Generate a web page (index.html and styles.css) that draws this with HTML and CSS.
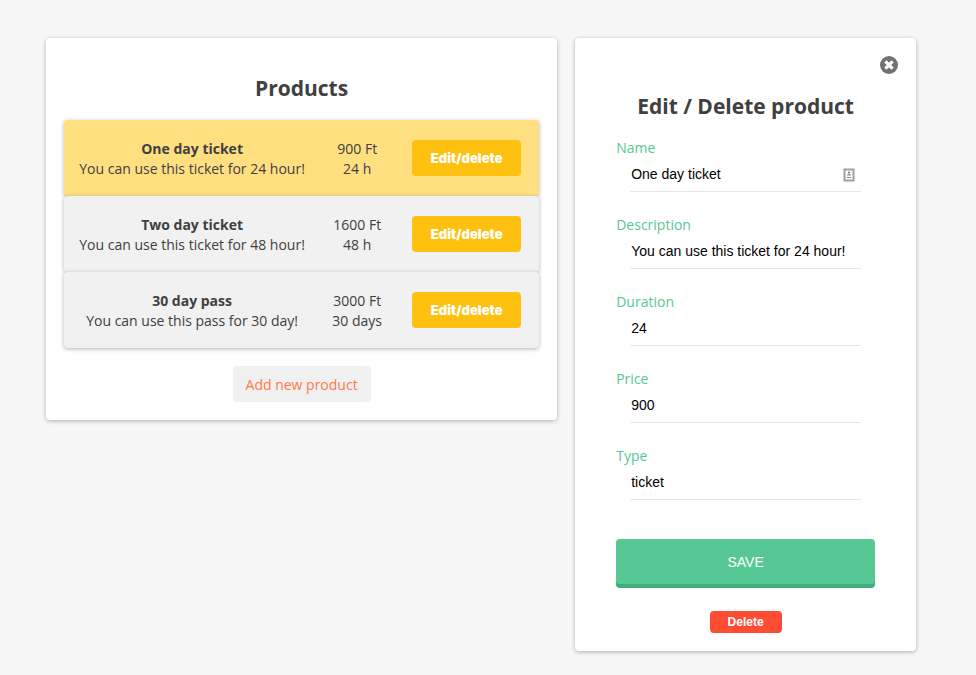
FILE: index.html
```html
<!DOCTYPE html>
<html lang="en">
<head>
<meta charset="utf-8">
<meta name="viewport" content="width=device-width, initial-scale=1">
<title>Products</title>
<link rel="stylesheet" href="styles.css">
</head>
<body>
<main class="layout">
  <section class="card">
    <h2 class="title">Products</h2>
    <ul class="products">
      <li class="product product-active">
        <div class="details"><strong>One day ticket</strong><br>You can use this ticket for 24 hour!</div>
        <div class="terms">900 Ft<br>24 h</div>
        <button class="edit" type="button">Edit/delete</button>
      </li>
      <li class="product">
        <div class="details"><strong>Two day ticket</strong><br>You can use this ticket for 48 hour!</div>
        <div class="terms">1600 Ft<br>48 h</div>
        <button class="edit" type="button">Edit/delete</button>
      </li>
      <li class="product">
        <div class="details"><strong>30 day pass</strong><br>You can use this pass for 30 day!</div>
        <div class="terms">3000 Ft<br>30 days</div>
        <button class="edit" type="button">Edit/delete</button>
      </li>
    </ul>
    <button class="add" type="button">Add new product</button>
  </section>

  <section class="card">
    <button class="close" type="button" aria-label="Close">
      <svg viewBox="0 0 18 18" width="18" height="18" aria-hidden="true">
        <circle cx="9" cy="9" r="9" fill="#727272"/>
        <path d="M5.4 5.4l7.2 7.2M12.6 5.4l-7.2 7.2" stroke="#fff" stroke-width="3.2"/>
      </svg>
    </button>
    <h2 class="title">Edit / Delete product</h2>
    <form class="form">
      <div class="field">
        <label for="name">Name</label>
        <div class="control">
          <input id="name" type="text" value="One day ticket">
          <svg class="contact" viewBox="0 0 12 14" width="12" height="14" aria-hidden="true">
            <rect x="1.5" y="1.5" width="9" height="11" fill="#fff" stroke="#a0a0a0" stroke-width="2"/>
            <circle cx="6" cy="4.6" r="1.1" fill="#777"/>
            <path d="M4 7.5V6.8Q6 5 8 6.8V7.5ZM4 9h4v1H4z" fill="#888"/>
          </svg>
        </div>
      </div>
      <div class="field">
        <label for="description">Description</label>
        <div class="control"><input id="description" type="text" value="You can use this ticket for 24 hour!"></div>
      </div>
      <div class="field">
        <label for="duration">Duration</label>
        <div class="control"><input id="duration" type="text" value="24"></div>
      </div>
      <div class="field">
        <label for="price">Price</label>
        <div class="control"><input id="price" type="text" value="900"></div>
      </div>
      <div class="field">
        <label for="type">Type</label>
        <div class="control"><input id="type" type="text" value="ticket"></div>
      </div>
      <button class="save" type="submit">SAVE</button>
      <button class="delete" type="button">Delete</button>
    </form>
  </section>
</main>
</body>
</html>
```
FILE: styles.css
```css
* {
  box-sizing: border-box;
}

body {
  margin: 0;
  background: #f7f7f7;
  color: #404040;
  font: 14px/20px "Open Sans", "Noto Sans", sans-serif;
}

button {
  border: 0;
  border-radius: 4px;
  cursor: pointer;
}

.layout {
  display: grid;
  grid-template-columns: minmax(0, 3fr) minmax(0, 2fr);
  align-items: start;
  gap: 18px;
  padding: 38px 60px 24px 46px;
}

.card {
  display: flex;
  flex-direction: column;
  padding: 18px;
  border-radius: 4px;
  background: #fff;
  box-shadow: 0 1px 4px rgba(0, 0, 0, 0.3);
}

.title {
  margin: 17px 0;
  font-size: 21px;
  line-height: 30px;
  text-align: center;
}

.products {
  margin: 0 0 18px;
  padding: 0;
  list-style: none;
}

.product {
  display: grid;
  grid-template-columns: minmax(0, 1fr) 110px 109px;
  align-items: center;
  padding: 17px 18px;
  border-radius: 4px;
  background: #f1f1f1;
  box-shadow: 0 1px 4px rgba(0, 0, 0, 0.3);
  text-align: center;
  white-space: nowrap;
}

.product-active {
  background: #ffdf80;
}

.details,
.terms {
  padding-top: 2px;
}

.details {
  margin: 0 -4px;
}

.edit {
  height: 36px;
  padding: 0;
  background: #ffc10f;
  color: #fff;
  font: 900 13px/20px Inter, sans-serif;
}

.add {
  align-self: center;
  height: 36px;
  padding: 2px 13px 0;
  background: #f0f0f0;
  color: #ff7849;
  font: inherit;
}

.close {
  align-self: flex-end;
  display: block;
  padding: 0;
  border-radius: 50%;
  background: none;
}

.close svg {
  display: block;
}

.close + .title {
  margin-bottom: 16px;
}

.form {
  display: flex;
  flex-direction: column;
  padding: 0 23px;
}

.field {
  margin-bottom: 22px;
}

.field label {
  display: block;
  padding-top: 1px;
  color: #57c894;
}

.control {
  display: flex;
  align-items: center;
  margin: 0 14px;
  border-bottom: 1px solid #e6e6e6;
}

.control input {
  flex: 1;
  min-width: 0;
  height: 33px;
  padding: 0 1px 2px;
  border: 0;
  background: none;
  color: #000;
  font: 14px/20px "Liberation Sans", Arial, sans-serif;
}

.contact {
  flex: none;
  margin-right: 6px;
}

.save {
  height: 45px;
  margin: 17px 0 27px;
  background: #57c894;
  box-shadow: 0 4px 0 #3eaf7a;
  color: #fff;
  font: 14px/20px "Liberation Sans", Arial, sans-serif;
}

.delete {
  align-self: center;
  height: 22px;
  padding: 0 18px;
  background: #ff4d35;
  color: #fff;
  font: bold 12px/20px "Liberation Sans", Arial, sans-serif;
}
```
